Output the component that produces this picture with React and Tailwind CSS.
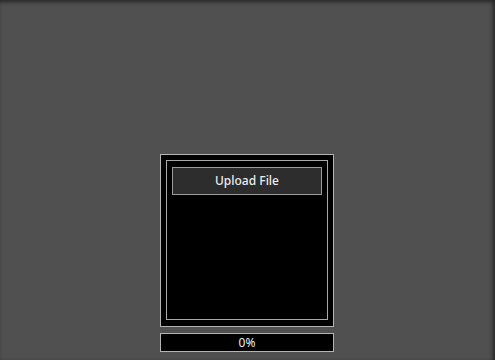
export default function App() {
  return (
    <div
      className="w-[495px] h-[360px] bg-[#505050] flex flex-col items-start pl-[160px] pt-[154px] shadow-[inset_-2px_2px_4px_rgba(0,0,0,0.55)] overflow-hidden"
      style={{ fontFamily: '"Noto Sans", "Open Sans", sans-serif' }}
    >
      <div className="w-[174px] h-[173px] border border-[#b4b4b4] bg-black p-[5px] pb-[6px]">
        <div className="h-full border border-[#a8a8a8] p-[5px] pt-[6px]">
          <button className="w-full h-[28px] border border-[#9a9a9a] bg-[#2d2d2d] text-[#ececec] text-[12px] font-medium flex items-center justify-center">
            Upload File
          </button>
        </div>
      </div>
      <div className="mt-[6px] w-[174px] h-[19px] border border-[#b4b4b4] bg-black text-[#ececec] text-[12px] font-normal flex items-center justify-center">
        0%
      </div>
    </div>
  );
}
